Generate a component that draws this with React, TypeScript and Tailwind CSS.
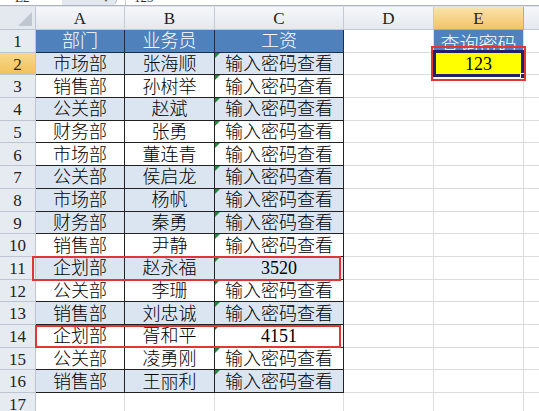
import React from "react";

type Row = { a: string; b: string; c: string; blue: boolean };

const rows: Row[] = [
  { a: "市场部", b: "张海顺", c: "输入密码查看", blue: true },
  { a: "销售部", b: "孙树举", c: "输入密码查看", blue: false },
  { a: "公关部", b: "赵斌", c: "输入密码查看", blue: true },
  { a: "财务部", b: "张勇", c: "输入密码查看", blue: false },
  { a: "市场部", b: "董连青", c: "输入密码查看", blue: false },
  { a: "公关部", b: "侯启龙", c: "输入密码查看", blue: true },
  { a: "市场部", b: "杨帆", c: "输入密码查看", blue: true },
  { a: "财务部", b: "秦勇", c: "输入密码查看", blue: true },
  { a: "销售部", b: "尹静", c: "输入密码查看", blue: false },
  { a: "企划部", b: "赵永福", c: "3520", blue: true },
  { a: "公关部", b: "李珊", c: "输入密码查看", blue: false },
  { a: "销售部", b: "刘忠诚", c: "输入密码查看", blue: true },
  { a: "企划部", b: "胥和平", c: "4151", blue: false },
  { a: "公关部", b: "凌勇刚", c: "输入密码查看", blue: false },
  { a: "销售部", b: "王丽利", c: "输入密码查看", blue: true },
];

const font = { fontFamily: '"Liberation Serif", "Noto Sans CJK SC", serif' };

function RowHead({ n, sel }: { n: number; sel?: boolean }) {
  return (
    <div
      className={`w-[36px] shrink-0 h-full flex items-center justify-center border-r border-b border-[#bcc5d1] text-[17px] font-normal text-[#222] pt-[2px] ${
        sel ? "bg-gradient-to-b from-[#f9d98c] to-[#f1c15a]" : "bg-[#e6ebf2]"
      }`}
    >
      {n}
    </div>
  );
}

function Empty({ w, last }: { w: string; last?: boolean }) {
  return <div className={`${w} shrink-0 h-full border-b border-[#dadcdd] ${last ? "grow" : "border-r"}`} />;
}

export default function App() {
  return (
    <div className="w-[539px] h-[411px] overflow-hidden bg-white relative text-black" style={font}>
      {/* formula bar strip */}
      <div className="h-[6px] flex border-b border-[#aab3bf] bg-white overflow-hidden">
        <div className="w-[62px] relative">
          <span className="absolute left-[15px] -top-[9px] text-[13px] leading-none text-[#333]">E2</span>
        </div>
        <div className="w-[55px] bg-[#e3e8ee] rounded-br-[5px] relative border-r border-[#b0b8c3]">
          <span className="absolute right-[6px] -top-[6px] text-[8px] text-[#444]">▼</span>
        </div>
        <div className="w-[8px]" />
        <div className="grow relative border-l border-[#c6ccd4]">
          <span className="absolute left-[8px] -top-[9px] text-[13px] leading-none text-[#333]">123</span>
        </div>
      </div>
      <div className="h-[1px] bg-[#dfe4ea]" />
      {/* column header */}
      <div className="h-[23px] flex text-[17px] text-[#222]">
        <div className="w-[36px] shrink-0 h-full bg-[#e4e9ef] border-r border-b border-[#bcc5d1] relative">
          <div
            className="absolute right-[3px] bottom-[3px] w-0 h-0"
            style={{ borderBottom: "14px solid #bfc6cf", borderLeft: "14px solid transparent" }}
          />
        </div>
        {[
          ["A", "w-[89px]"],
          ["B", "w-[90px]"],
          ["C", "w-[129px]"],
          ["D", "w-[90px]"],
        ].map(([l, w]) => (
          <div
            key={l}
            className={`${w} shrink-0 h-full flex items-center justify-center bg-gradient-to-b from-[#f5f7fa] to-[#e4e9ef] border-r border-b border-[#c3cad3] pt-[2px]`}
          >
            {l}
          </div>
        ))}
        <div className="w-[90px] shrink-0 h-full flex items-center justify-center bg-gradient-to-b from-[#fae3ae] to-[#f2c462] border-r border-b border-[#c9a860] pt-[2px]">
          E
        </div>
        <div className="grow h-full bg-gradient-to-b from-[#f5f7fa] to-[#e4e9ef] border-b border-[#c3cad3]" />
      </div>

      {/* row 1 */}
      <div className="h-[22.7px] flex font-light">
        <RowHead n={1} />
        <div className="w-[89px] shrink-0 h-full bg-[#4f81bd] text-white text-[18px] flex items-center justify-center border-r border-b border-[#1c2f4a] pt-[2px]">
          部门
        </div>
        <div className="w-[90px] shrink-0 h-full bg-[#4f81bd] text-white text-[18px] flex items-center justify-center border-r border-b border-[#1c2f4a] pt-[2px]">
          业务员
        </div>
        <div className="w-[129px] shrink-0 h-full bg-[#4f81bd] text-white text-[18px] flex items-center justify-center border-r border-b border-[#1c2f4a] pt-[2px]">
          工资
        </div>
        <Empty w="w-[90px]" />
        <div className="w-[90px] shrink-0 h-full bg-[#4f81bd] text-white text-[19px] flex items-center justify-center border-r border-b border-[#dadcdd] overflow-hidden pt-[9px]">
          查询密码
        </div>
        <Empty w="w-[15px]" last />
      </div>

      {rows.map((r, i) => {
        const bg = r.blue ? "bg-[#dbe5f1]" : "bg-white";
        return (
          <div key={i} className="h-[22.7px] flex font-light">
            <RowHead n={i + 2} sel={i === 0} />
            <div className={`w-[89px] shrink-0 h-full ${bg} text-[18px] flex items-center justify-center border-r border-b border-[#222] pt-[2px]`}>
              {r.a}
            </div>
            <div className={`w-[90px] shrink-0 h-full ${bg} text-[18px] flex items-center justify-center border-r border-b border-[#222] pt-[2px]`}>
              {r.b}
            </div>
            <div className={`w-[129px] shrink-0 h-full ${bg} text-[18px] flex items-center justify-center border-r border-b border-[#222] relative pt-[2px]`}>
              <div className="absolute left-0 top-0 w-0 h-0 border-t-[5px] border-r-[5px] border-t-[#1d8a3c] border-r-transparent" />
              {r.c}
            </div>
            <Empty w="w-[90px]" />
            {i === 0 ? (
              <div className="w-[90px] shrink-0 h-full bg-[#ffff00] text-[18px] flex items-center justify-center border-r border-b border-[#dadcdd] pt-[2px]">
                123
              </div>
            ) : (
              <Empty w="w-[90px]" />
            )}
            <Empty w="w-[15px]" last />
          </div>
        );
      })}

      {/* row 17 */}
      <div className="h-[22.7px] flex">
        <RowHead n={17} />
        <Empty w="w-[89px]" />
        <Empty w="w-[90px]" />
        <Empty w="w-[129px]" />
        <Empty w="w-[90px]" />
        <Empty w="w-[90px]" />
        <Empty w="w-[15px]" last />
      </div>

      {/* selection of E2 */}
      <div className="absolute left-[433px] top-[50px] w-[91px] h-[27px] border-[3px] border-[#22226a]" />
      <div className="absolute left-[520px] top-[73px] w-[6px] h-[6px] bg-[#22226a] border border-white" />

      {/* red highlight boxes */}
      <div className="absolute left-[431px] top-[46px] w-[95px] h-[35px] border-2 border-[#e03636]" />
      <div className="absolute left-[32px] top-[256px] w-[309px] h-[25px] border-2 border-[#e03636]" />
      <div className="absolute left-[35px] top-[325px] w-[306px] h-[23px] border-2 border-[#e03636]" />
    </div>
  );
}
